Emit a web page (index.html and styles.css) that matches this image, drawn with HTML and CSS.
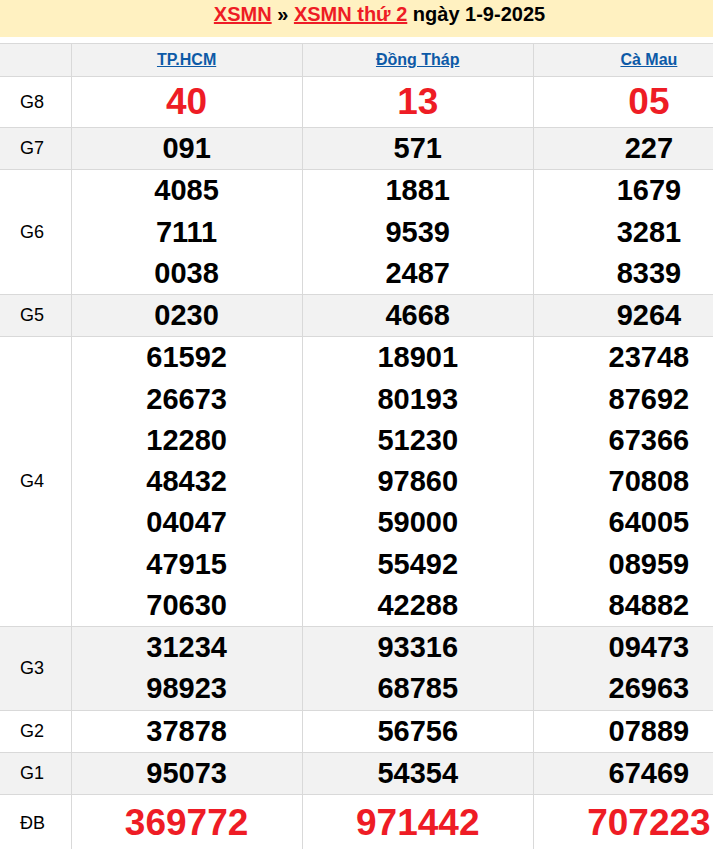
FILE: index.html
```html
<!DOCTYPE html>
<html lang="vi">
<head>
<meta charset="utf-8">
<title>XSMN thứ 2 ngày 1-9-2025</title>
<link rel="stylesheet" href="styles.css">
</head>
<body>
<div class="viewport">
<div class="page">
  <h2 class="title"><a href="#">XSMN</a> » <a href="#">XSMN thứ 2</a> ngày 1-9-2025</h2>
  <table class="result">
    <colgroup><col class="c-label"><col class="c-prov"><col class="c-prov"><col class="c-prov"></colgroup>
    <thead>
      <tr class="head">
        <th></th>
        <th><a href="#">TP.HCM</a></th>
        <th><a href="#">Đồng Tháp</a></th>
        <th><a href="#">Cà Mau</a></th>
      </tr>
    </thead>
    <tbody>
      <tr class="g8">
        <td class="lbl">G8</td>
        <td><div class="big">40</div></td>
        <td><div class="big">13</div></td>
        <td><div class="big">05</div></td>
      </tr>
      <tr class="alt">
        <td class="lbl">G7</td>
        <td><div class="n">091</div></td>
        <td><div class="n">571</div></td>
        <td><div class="n">227</div></td>
      </tr>
      <tr>
        <td class="lbl">G6</td>
        <td><div class="n">4085</div><div class="n">7111</div><div class="n">0038</div></td>
        <td><div class="n">1881</div><div class="n">9539</div><div class="n">2487</div></td>
        <td><div class="n">1679</div><div class="n">3281</div><div class="n">8339</div></td>
      </tr>
      <tr class="alt">
        <td class="lbl">G5</td>
        <td><div class="n">0230</div></td>
        <td><div class="n">4668</div></td>
        <td><div class="n">9264</div></td>
      </tr>
      <tr>
        <td class="lbl">G4</td>
        <td><div class="n">61592</div><div class="n">26673</div><div class="n">12280</div><div class="n">48432</div><div class="n">04047</div><div class="n">47915</div><div class="n">70630</div></td>
        <td><div class="n">18901</div><div class="n">80193</div><div class="n">51230</div><div class="n">97860</div><div class="n">59000</div><div class="n">55492</div><div class="n">42288</div></td>
        <td><div class="n">23748</div><div class="n">87692</div><div class="n">67366</div><div class="n">70808</div><div class="n">64005</div><div class="n">08959</div><div class="n">84882</div></td>
      </tr>
      <tr class="alt">
        <td class="lbl">G3</td>
        <td><div class="n">31234</div><div class="n">98923</div></td>
        <td><div class="n">93316</div><div class="n">68785</div></td>
        <td><div class="n">09473</div><div class="n">26963</div></td>
      </tr>
      <tr>
        <td class="lbl">G2</td>
        <td><div class="n">37878</div></td>
        <td><div class="n">56756</div></td>
        <td><div class="n">07889</div></td>
      </tr>
      <tr class="alt">
        <td class="lbl">G1</td>
        <td><div class="n">95073</div></td>
        <td><div class="n">54354</div></td>
        <td><div class="n">67469</div></td>
      </tr>
      <tr class="db">
        <td class="lbl">ĐB</td>
        <td><div class="big">369772</div></td>
        <td><div class="big">971442</div></td>
        <td><div class="big">707223</div></td>
      </tr>
    </tbody>
  </table>
</div>
</div>
</body>
</html>
```

FILE: styles.css
```css
html, body {
  margin: 0;
  padding: 0;
  background: #ffffff;
}

body {
  font-family: "Liberation Sans", Arial, sans-serif;
  color: #000000;
}

.viewport {
  width: 100%;
  overflow: hidden;
}

.page {
  width: 765px;
}

.title {
  margin: 0 0 6px 0;
  height: 37px;
  box-sizing: border-box;
  padding: 3px 6px 0 0;
  background: #fff1c1;
  text-align: center;
  font-size: 20px;
  font-weight: bold;
  line-height: 23px;
  color: #000000;
}

.title a {
  color: #ee1c25;
  text-decoration: underline;
}

.result {
  width: 765px;
  table-layout: fixed;
  border-collapse: collapse;
  border-spacing: 0;
}

.c-label {
  width: 71px;
}

.c-prov {
  width: 231px;
}

.result th,
.result td {
  border: 1px solid #d9d9d9;
  padding: 0;
  text-align: center;
  vertical-align: middle;
}

.result tr > :first-child {
  border-left: none;
}

.head th {
  height: 32px;
  background: #f2f2f2;
  font-size: 16px;
  font-weight: bold;
}

.head a {
  color: #0d5aa7;
  text-decoration: underline;
}

.alt td {
  background: #f2f2f2;
}

.lbl {
  text-align: left !important;
  padding-left: 20px !important;
  font-size: 18px;
}

.n {
  font-size: 29px;
  font-weight: bold;
  line-height: 41.25px;
}

.big {
  font-size: 37px;
  font-weight: bold;
  color: #ee1c25;
  line-height: 50px;
}

.db .big {
  line-height: 56px;
}
```
